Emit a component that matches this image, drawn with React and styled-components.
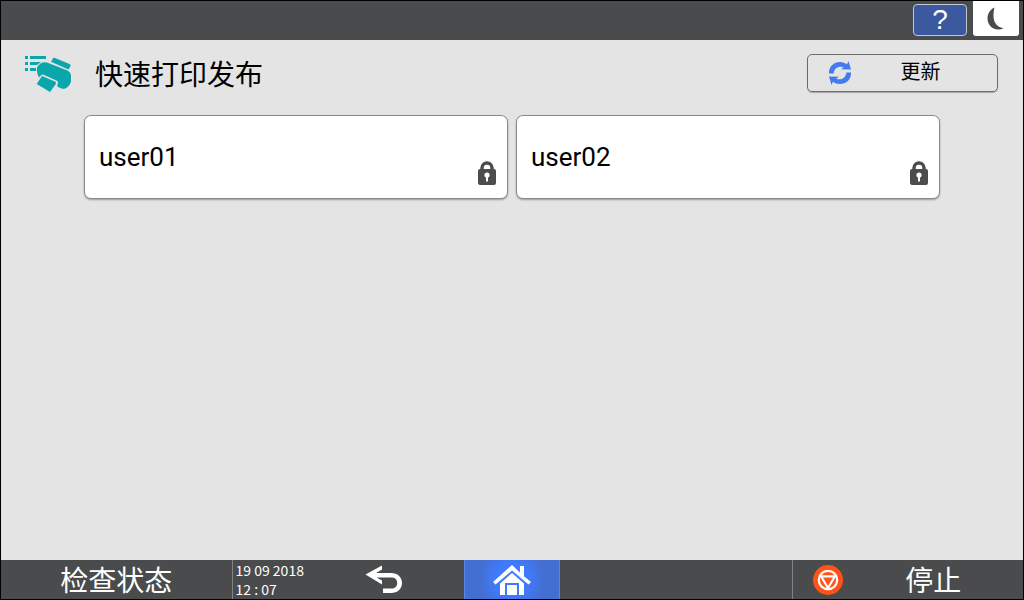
import React from 'react';
import styled, { createGlobalStyle } from 'styled-components';

const users = ['user01', 'user02'];

const App = () => {
    return (
        <Screen>
            <GlobalStyle />
            <TopBar>
                <HelpButton aria-label="help">?</HelpButton>
                <SleepButton aria-label="sleep">
                    <MoonIcon />
                </SleepButton>
            </TopBar>

            <Header>
                <PrintIcon />
                <Title>快速打印发布</Title>
                <RefreshButton>
                    <RefreshIcon />
                    <RefreshLabel>更新</RefreshLabel>
                </RefreshButton>
            </Header>

            <UserList>
                {users.map((user) => (
                    <UserCard key={user}>
                        <UserName>{user}</UserName>
                        <LockIcon />
                    </UserCard>
                ))}
            </UserList>

            <BottomBar>
                <StatusButton>检查状态</StatusButton>
                <ClockArea>
                    <Clock>
                        <div>19 09 2018</div>
                        <div>12 : 07</div>
                    </Clock>
                    <BackButton aria-label="back">
                        <BackIcon />
                    </BackButton>
                </ClockArea>
                <HomeButton aria-label="home">
                    <HomeIcon />
                </HomeButton>
                <div />
                <StopButton>
                    <StopIcon />
                    <StopLabel>停止</StopLabel>
                </StopButton>
            </BottomBar>
        </Screen>
    );
};

export default App;

const MoonIcon = () => (
    <svg width="18" height="24" viewBox="0 0 18 24" fill="#4a4b4d">
        <path d="M7.500 0.5C3 2.5 0.500 6.700 0.500 11.500C0.500 18 5.500 22.500 11 22.500C13.200 22.500 15 22 16.500 21C11 20.500 6.800 16.500 6.500 9.500C6.400 6 6.800 3 7.500 0.500Z" />
    </svg>
);

const PrintIcon = () => (
    <svg width="48" height="40" viewBox="0 0 48 40" fill="#0aa6ab">
        <path d="M1 3h3v3h-3zM6 3h16v3h-16zM1 9h3v3h-3zM6 9h11l-4 3h-7zM1 15h3v3h-3zM6 15h6v3h-6z" />
        <path d="M27 8.800L28.800 5.700Q29.500 4.500 31 5L45.500 11Q47 11.700 46.500 13L44.500 16.500Z" />
        <path d="M17 10.300Q19.500 8.500 23 9.500L43.500 17.500Q47.200 19.500 47 23.500V28.500Q46.500 31.500 43 34.500Q40.500 36.500 37.500 35.500L34 34Q33 33.500 33.500 31.500L34 29.500Q34 28.200 33 27.700L19.500 21.700Q17.800 21.200 16.800 22.500L15 24.500Q13 21.500 13 18V14.500Q14 12 17 10.300Z" />
        <path d="M18 23L32 28.900L31.500 31.500L26 39L12.700 31Z" />
    </svg>
);

const RefreshIcon = () => (
    <svg width="24" height="24" viewBox="0 0 24 24" fill="#427af0">
        <path d="M1 12.500C0.500 5.500 6 1 12 1C14.700 1 17.200 2 19 3.300L20.500 0L23 8.500L13 8.200L15.800 6.300C11 4.300 6 7 5.600 12.500Z" />
        <path d="M23 11.500C23.500 18.500 18 23 12 23C9.300 23 6.800 22 5 20.700L3.500 24L1 15.500L11 15.800L8.200 17.700C13 19.700 18 17 18.400 11.500Z" />
    </svg>
);

const LockIcon = () => (
    <svg width="18" height="24" viewBox="0 0 18 24">
        <path d="M4 11V7a5 5 0 0 1 10 0V11" fill="none" stroke="#4c4c4c" strokeWidth="3.5" />
        <rect y="8" width="18" height="16" rx="2" fill="#4c4c4c" />
        <circle cx="9" cy="14" r="2.600" fill="#fff" />
        <path d="M8 14h2v6.500h-2z" fill="#fff" />
    </svg>
);

const BackIcon = () => (
    <svg width="38" height="30" viewBox="0 0 38 30">
        <path d="M0.500 9.500L17 0.500V4.500L11 8H26C32.500 8 37 12 37 18C37 24 32.500 28 26 28H18V23.500H26C30 23.500 32.200 21.500 32.200 18C32.200 14.500 30 12.500 26 12.500H11.500L17 15.500V19.500Z" fill="#fff" />
    </svg>
);

const HomeIcon = () => (
    <svg width="38" height="32" viewBox="0 0 38 32" fill="#fff">
        <path d="M19 1L27 8.500V2H31V12.200L38 18L35.500 20.500L19 6.500L2.500 20.500L0 18Z" />
        <path d="M19 9L31 19.500V31H26V19H12V31H7V19.500Z" />
        <path d="M14 21h10v10h-10z" />
    </svg>
);

const StopIcon = () => (
    <svg width="32" height="32" viewBox="0 0 32 32">
        <circle cx="16" cy="16" r="15" fill="#ff5318" />
        <circle cx="16" cy="16" r="9.200" fill="none" stroke="#fff" strokeWidth="2.200" />
        <path d="M9 12.300H23L16 24Z" fill="none" stroke="#fff" strokeWidth="2.200" strokeLinejoin="round" />
    </svg>
);

const GlobalStyle = createGlobalStyle`
    * {
        box-sizing: border-box;
    }

    body {
        margin: 0;
        background-color: #e4e4e4;
    }

    body, button {
        font-family: "Noto Sans CJK SC", sans-serif;
    }

    svg {
        display: block;
        flex-shrink: 0;
    }
`;

const Button = styled.button`
    display: flex;
    align-items: center;
    padding: 0;
    border: none;
    background: none;
    color: inherit;
    cursor: pointer;
`;

const Screen = styled.div`
    display: flex;
    flex-direction: column;
    min-height: 100vh;
    border: 1px solid #000;
    background-color: #e4e4e4;
    color: #000;
`;

const TopBar = styled.div`
    display: flex;
    justify-content: flex-end;
    align-items: flex-start;
    gap: 6px;
    height: 39px;
    padding-right: 4px;
    background-color: #4a4b4d;
`;

const HelpButton = styled(Button)`
    justify-content: center;
    width: 54px;
    height: 32px;
    margin-top: 3px;
    border: 1px solid #c4c8d0;
    border-radius: 4px;
    background-color: #3c589f;
    color: #fff;
    font-family: "Liberation Sans", sans-serif;
    font-size: 28px;
    line-height: 30px;
`;

const SleepButton = styled(Button)`
    justify-content: center;
    width: 46px;
    height: 35px;
    border-radius: 0 0 3px 3px;
    background-color: #fff;
`;

const Header = styled.header`
    display: flex;
    align-items: center;
    height: 66px;
    padding: 0 25px 0 23px;
`;

const Title = styled.h1`
    flex: 1;
    margin: 0 0 0 23px;
    font-size: 28px;
    font-weight: 400;
    line-height: 40px;
`;

const RefreshButton = styled(Button)`
    width: 191px;
    height: 38px;
    padding: 0 20px;
    border: 1px solid #6c6c6c;
    border-radius: 5px;
    box-shadow: 0 1px 1px #a8a8a8;
`;

const RefreshLabel = styled.span`
    flex: 1;
    padding-left: 12px;
    padding-bottom: 4px;
    font-size: 20px;
    line-height: 28px;
`;

const UserList = styled.main`
    flex: 1;
    display: grid;
    grid-template-columns: 1fr 1fr;
    align-content: start;
    gap: 8px;
    padding: 9px 83px;
`;

const UserCard = styled(Button)`
    justify-content: space-between;
    height: 84px;
    padding: 0 11px 0 14px;
    border: 1px solid #8a8a8a;
    border-radius: 7px;
    background-color: #fff;
    box-shadow: 0 1px 2px #999;

    svg {
        align-self: flex-end;
        margin-bottom: 13px;
    }
`;

const UserName = styled.span`
    font-family: Roboto, "Noto Sans CJK SC", sans-serif;
    font-size: 26px;
    line-height: 36px;
`;

const BottomBar = styled.footer`
    display: grid;
    grid-template-columns: 1fr 1fr 96px 1fr 1fr;
    height: 39px;
    background-color: #4a4b4d;
    color: #fff;
`;

const StatusButton = styled(Button)`
    justify-content: center;
    border-right: 1px solid #818284;
    font-size: 28px;
    line-height: 39px;
`;

const ClockArea = styled.div`
    display: flex;
    align-items: center;
`;

const Clock = styled.div`
    width: 132px;
    padding-left: 3px;
    font-size: 14px;
    line-height: 19px;
`;

const BackButton = styled(Button)`
    height: 39px;
`;

const HomeButton = styled(Button)`
    justify-content: center;
    border: solid #5c86e6;
    border-width: 0 1px;
    background: radial-gradient(circle, #3f7bff 16px, #446fd2 32px);
`;

const StopButton = styled(Button)`
    padding-left: 19px;
    border-left: 1px solid #818284;
`;

const StopLabel = styled.span`
    flex: 1;
    font-size: 28px;
    line-height: 39px;
`;
